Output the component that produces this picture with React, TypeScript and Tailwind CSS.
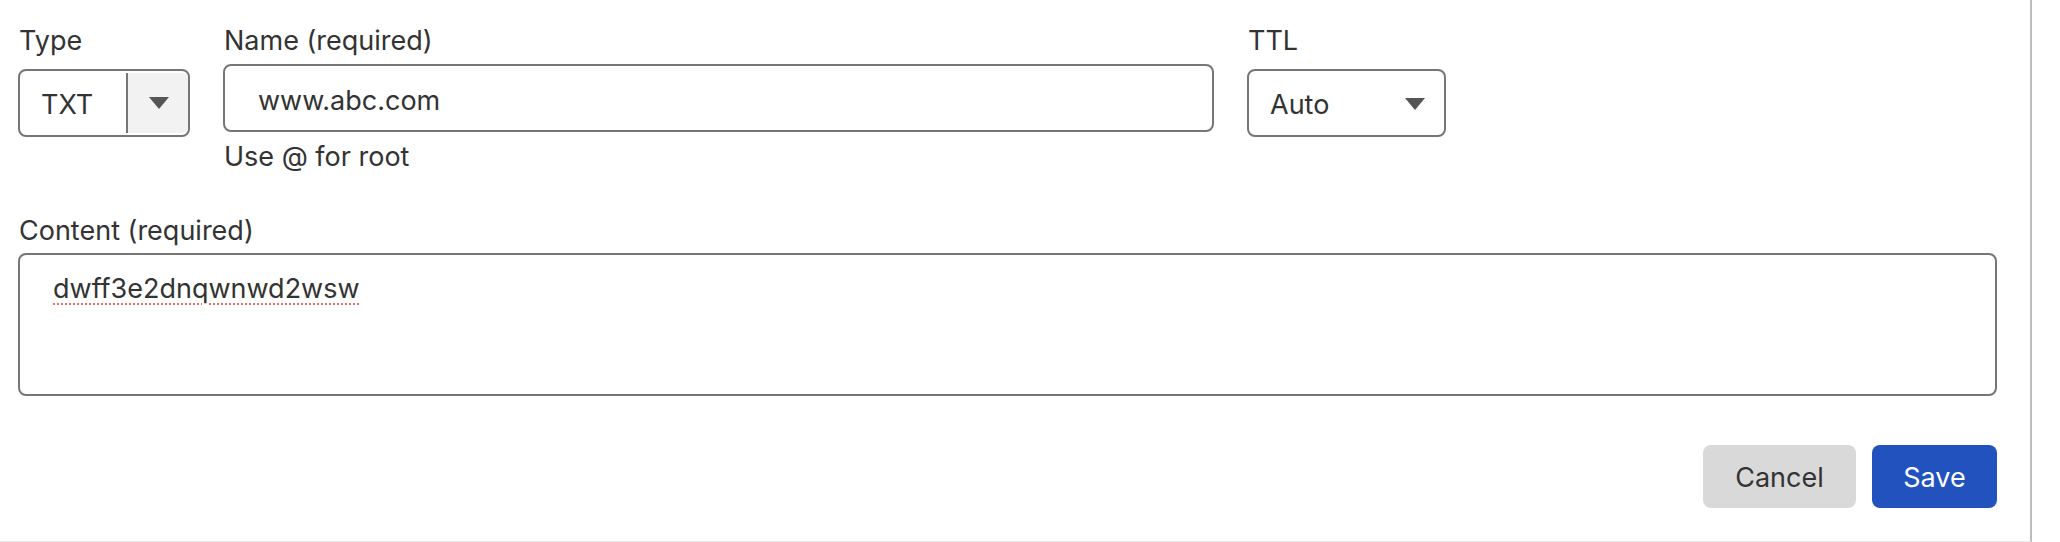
import React from "react";

function Caret() {
  return (
    <svg width="20" height="12" viewBox="0 0 20 12" className="block">
      <polygon points="0,0 20,0 10,12" fill="#555555" />
    </svg>
  );
}

export default function App() {
  return (
    <div className="box-border h-[542px] w-[2032px] border-r-2 border-b border-r-[#bdbdbd] border-b-[#e8e8e8] bg-white pl-[18px] pr-[33px] pt-[25px] font-['Inter',sans-serif] text-[27px] leading-[32px] text-[#333333]">
      {/* Top row */}
      <div className="flex gap-[33px]">
        {/* Type */}
        <div className="flex flex-col">
          <div className="pl-[1px]">Type</div>
          <div className="mt-[12px] box-border flex h-[68px] w-[172px] rounded-[8px] border-2 border-[#767676] bg-white">
            <div className="flex-1 pl-[21px] pt-[18px]">TXT</div>
            <div className="my-[2px] flex w-[62px] items-center justify-center rounded-r-[6px] border-l-2 border-[#767676] bg-[#f2f2f2] pl-[2px]">
              <Caret />
            </div>
          </div>
        </div>

        {/* Name */}
        <div className="flex flex-col">
          <div className="pl-[1px]">Name (required)</div>
          <div className="mt-[7px] box-border h-[68px] w-[991px] rounded-[8px] border-2 border-[#767676] bg-white pl-[33px] pt-[19px]">
            www.abc.com
          </div>
          <div className="mt-[9px] pl-[1px]">Use @ for root</div>
        </div>

        {/* TTL */}
        <div className="flex flex-col">
          <div className="pl-[1px]">TTL</div>
          <div className="mt-[12px] box-border flex h-[68px] w-[199px] items-start justify-between rounded-[8px] border-2 border-[#767676] bg-white pl-[21px] pr-[19px] pt-[18px]">
            <span>Auto</span>
            <span className="pt-[9px]">
              <Caret />
            </span>
          </div>
        </div>
      </div>

      {/* Content */}
      <div className="mt-[42px] flex flex-col">
        <div className="pl-[1px]">Content (required)</div>
        <div className="mt-[6px] box-border h-[143px] w-full rounded-[8px] border-2 border-[#767676] bg-white pl-[33px] pt-[18px]">
          <span className="underline decoration-[#ee6b6b] decoration-dotted decoration-2 underline-offset-[5px]">
            dwff3e2dnqwnwd2wsw
          </span>
        </div>
      </div>

      {/* Buttons */}
      <div className="mt-[49px] flex justify-end gap-[16px]">
        <button className="box-border flex h-[63px] w-[153px] items-center justify-center rounded-[8px] bg-[#d9d9d9] pt-[2px] text-[27px] leading-[32px] text-[#333333]">
          Cancel
        </button>
        <button className="box-border flex h-[63px] w-[125px] items-center justify-center rounded-[8px] bg-[#2152be] pt-[2px] text-[27px] leading-[32px] text-white">
          Save
        </button>
      </div>
    </div>
  );
}
